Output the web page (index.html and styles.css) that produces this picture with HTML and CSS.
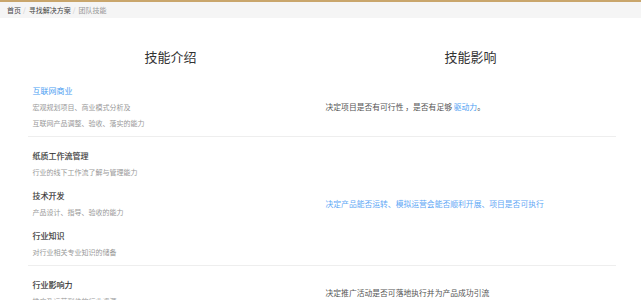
FILE: index.html
```html
<!DOCTYPE html>
<html lang="zh-CN">
<head>
<meta charset="utf-8">
<title>团队技能</title>
<link rel="stylesheet" href="styles.css">
</head>
<body>
<nav class="crumbs">
  <a class="crumb" href="#">首页</a><span class="sep">/</span>
  <a class="crumb" href="#">寻找解决方案</a><span class="sep">/</span>
  <span class="crumb current">团队技能</span>
</nav>
<main class="board">
  <div class="heads">
    <h2 class="head">技能介绍</h2>
    <h2 class="head">技能影响</h2>
  </div>
  <section class="row">
    <div class="skills">
      <div class="skill">
        <div class="skill-title blue">互联网商业</div>
        <div class="skill-desc">宏观规划项目、商业模式分析及</div>
        <div class="skill-desc">互联网产品调整、验收、落实的能力</div>
      </div>
    </div>
    <div class="effect">决定项目是否有可行性 ，是否有足够 <span class="link">驱动力</span>。</div>
  </section>
  <section class="row">
    <div class="skills">
      <div class="skill">
        <div class="skill-title">纸质工作流管理</div>
        <div class="skill-desc">行业的线下工作流了解与管理能力</div>
      </div>
      <div class="skill">
        <div class="skill-title">技术开发</div>
        <div class="skill-desc">产品设计、指导、验收的能力</div>
      </div>
      <div class="skill">
        <div class="skill-title">行业知识</div>
        <div class="skill-desc">对行业相关专业知识的储备</div>
      </div>
    </div>
    <div class="effect blue-text">决定产品能否运转、模拟运营会能否顺利开展、项目是否可执行</div>
  </section>
  <section class="row">
    <div class="skills">
      <div class="skill">
        <div class="skill-title">行业影响力</div>
        <div class="skill-desc">推广及运营到位的行业资源</div>
      </div>
    </div>
    <div class="effect">决定推广活动是否可落地执行并为产品成功引流</div>
  </section>
</main>
</body>
</html>
```

FILE: styles.css
```css
* { box-sizing: border-box; }
html, body { margin: 0; padding: 0; background: #fff; }
body {
  font-family: "Noto Sans CJK SC", "Noto Sans", sans-serif;
  color: #333;
}
.crumbs {
  border-top: 2px solid #c9a66c;
  background: #f5f5f5;
  height: 18px;
  padding-left: 7px;
  display: flex;
  align-items: center;
  font-size: 7px;
  line-height: 1;
}
.crumb { color: #444; text-decoration: none; }
.crumb.current { color: #999; }
.sep { color: #ccc; margin: 0 3px 0 2px; }

.board {
  width: 600px;
  margin: 0 auto;
  padding-bottom: 20px;
}
.heads {
  display: grid;
  grid-template-columns: 1fr 1fr;
  padding: 29px 0 5px;
}
.head {
  margin: 0;
  text-align: center;
  font-size: 13px;
  line-height: 20px;
  font-weight: 400;
  color: #333;
}
.row {
  display: grid;
  grid-template-columns: 293px 1fr;
  margin: 0 5px 0 7px;
  border-bottom: 1px solid #eeeeee;
  padding: 11px 0 5px;
}
.skills {
  display: flex;
  flex-direction: column;
  gap: 8px;
  padding-left: 5px;
}
.skill-title {
  font-size: 8px;
  line-height: 16px;
  color: #333;
  font-weight: 400;
  -webkit-text-stroke: 0.15px #333;
}
.skill-title.blue { color: #4a9ef2; -webkit-text-stroke: 0; }
.skill-desc {
  font-size: 7px;
  line-height: 16px;
  color: #999;
}
.effect {
  align-self: center;
  padding-left: 5px;
  font-size: 7.8px;
  line-height: 16px;
  color: #555;
}
.blue-text { color: #5fa8f5; }
.link { color: #4a9ef2; }
```
